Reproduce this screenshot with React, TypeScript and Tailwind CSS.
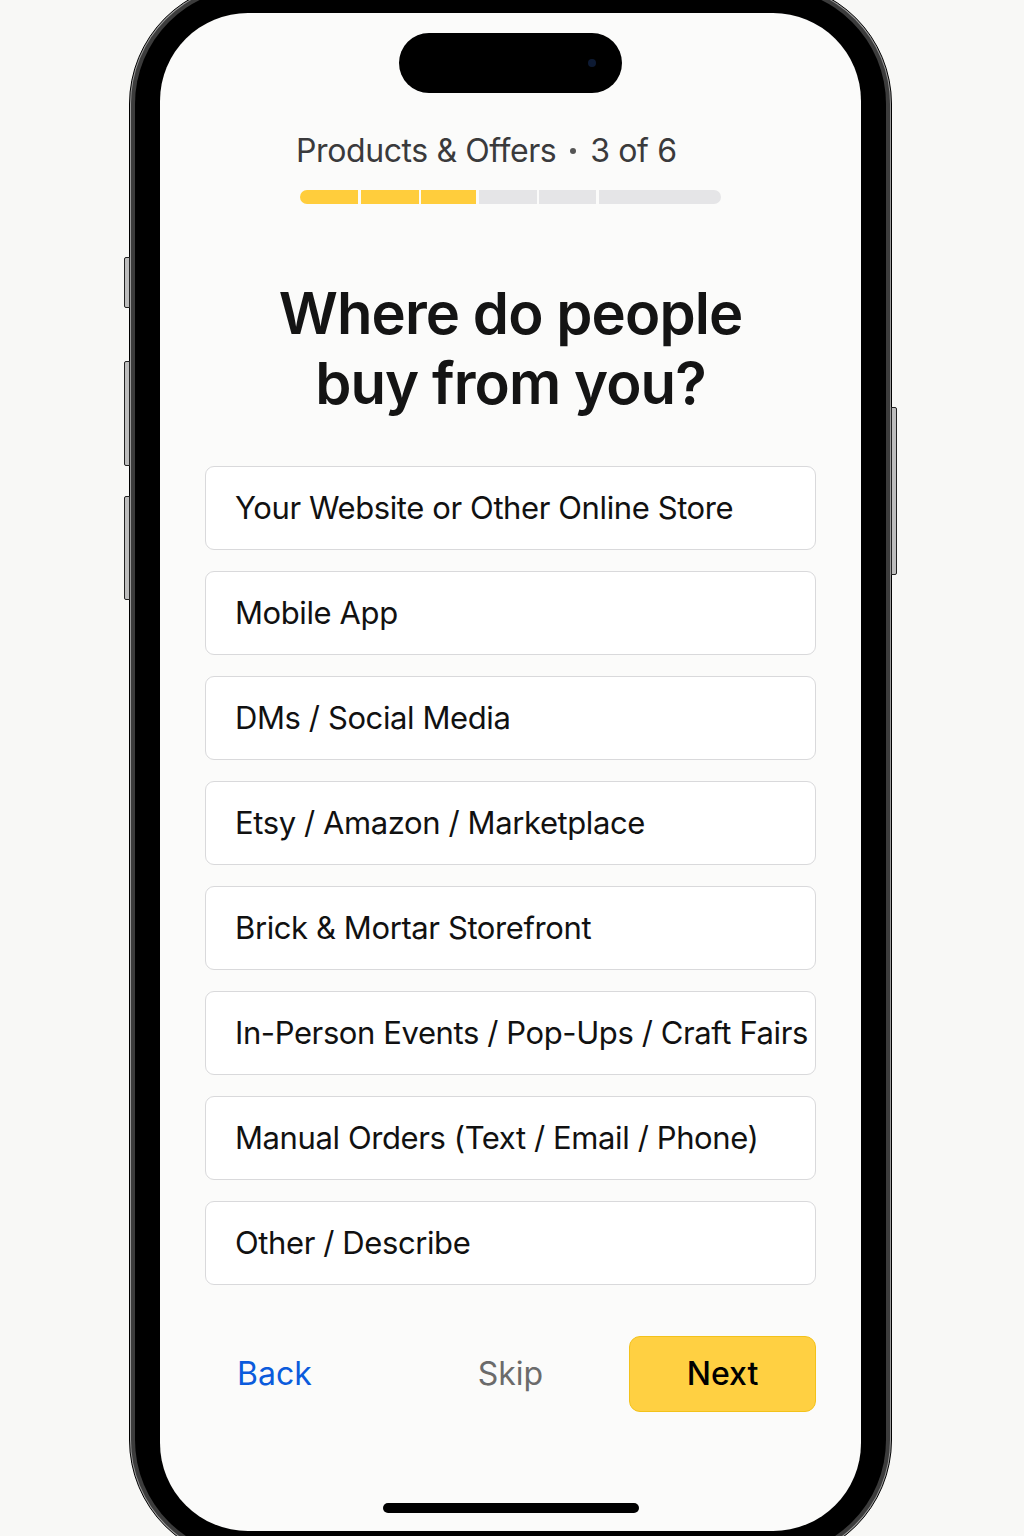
import React from "react";

const options = [
  "Your Website or Other Online Store",
  "Mobile App",
  "DMs / Social Media",
  "Etsy / Amazon / Marketplace",
  "Brick & Mortar Storefront",
  "In-Person Events / Pop-Ups / Craft Fairs",
  "Manual Orders (Text / Email / Phone)",
  "Other / Describe",
];

export default function App() {
  return (
    <div className="h-[1536px] w-[1024px] overflow-hidden bg-[#f8f8f6] font-['Inter',sans-serif]">
      <div className="relative ml-[129px] -mt-[18px] h-[1580px] w-[763px]">
        {/* side buttons */}
        <div className="absolute -left-[5px] top-[275px] h-[51px] w-[6px] rounded-l-[2px] border border-[#222] bg-[#bdbdbd]" />
        <div className="absolute -left-[5px] top-[379px] h-[105px] w-[6px] rounded-l-[2px] border border-[#222] bg-[#bdbdbd]" />
        <div className="absolute -left-[5px] top-[514px] h-[104px] w-[6px] rounded-l-[2px] border border-[#222] bg-[#bdbdbd]" />
        <div className="absolute -right-[5px] top-[425px] h-[168px] w-[6px] rounded-r-[2px] border border-[#222] bg-[#bdbdbd]" />
        <div className="h-full w-full rounded-[122px] border-[1.5px] border-black bg-[#9a9a9a] p-[1px]">
          <div className="h-full w-full rounded-[120px] bg-[#3c3c3c] p-[4px]">
            <div className="h-full w-full rounded-[116px] bg-black p-[25px]">
              <div className="flex h-full w-full flex-col items-center overflow-hidden rounded-[88px] bg-[#fbfbfa]">
                {/* dynamic island */}
                <div className="mt-[20px] flex h-[60px] w-[223px] items-center justify-end rounded-full bg-black pr-[26px]">
                  <div className="h-[8px] w-[8px] rounded-full bg-[#0d1a33]" />
                </div>

                {/* header */}
                <div className="mt-[38px] flex w-[421px] flex-col">
                  <div className="-ml-[4px] flex items-center whitespace-nowrap text-[32px] leading-[40px] tracking-[-0.4px] text-[#3a3a3c]">
                    <span>Products &amp; Offers</span>
                    <span className="mx-[14px] h-[6px] w-[6px] rounded-full bg-[#555]" />
                    <span>3 of 6</span>
                  </div>
                  <div className="mt-[19px] flex h-[14px] w-full gap-[2.5px] overflow-hidden rounded-full">
                    <div className="w-[58px] bg-[#ffcd3c]" />
                    <div className="w-[58px] bg-[#ffcd3c]" />
                    <div className="w-[55px] bg-[#ffcd3c]" />
                    <div className="w-[58px] bg-[#e5e5e7]" />
                    <div className="w-[57px] bg-[#e5e5e7]" />
                    <div className="flex-1 bg-[#e5e5e7]" />
                  </div>
                </div>

                {/* heading */}
                <h1 className="mt-[74px] text-center text-[58px] font-semibold leading-[70px] tracking-[-0.9px] text-[#141414]">
                  Where do people
                  <br />
                  buy from you?
                </h1>

                {/* options */}
                <div className="mt-[48px] flex w-[611px] flex-col gap-[21px]">
                  {options.map((o) => (
                    <div
                      key={o}
                      className="flex h-[84px] items-center whitespace-nowrap rounded-[9px] border-[1.5px] border-[#d9d9db] bg-white pl-[29px] text-[31px] tracking-[-0.4px] text-[#111]"
                    >
                      {o}
                    </div>
                  ))}
                </div>

                {/* buttons */}
                <div className="mt-[51px] grid w-[611px] grid-cols-3 items-center">
                  <div className="pl-[32px] text-[32px] text-[#0b5bdc]">Back</div>
                  <div className="text-center text-[32px] text-[#6b6b6b]">Skip</div>
                  <div className="flex h-[76px] w-[187px] items-center justify-center justify-self-end rounded-[11px] border border-[#f3c21a] bg-[#ffd042] text-[32px] font-medium text-black">
                    Next
                  </div>
                </div>

                {/* home indicator */}
                <div className="mt-[91px] h-[10px] w-[256px] rounded-full bg-black" />
              </div>
            </div>
          </div>
        </div>
      </div>
    </div>
  );
}
